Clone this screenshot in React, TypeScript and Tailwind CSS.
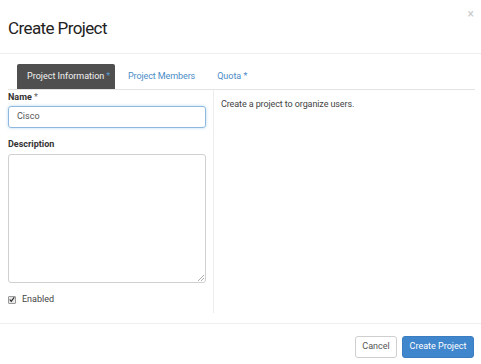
import React from "react";

export default function App() {
  return (
    <div className="w-[481px] h-[364px] bg-white relative overflow-hidden text-[#333]" style={{ fontFamily: "Roboto, 'Liberation Sans', sans-serif" }}>
      <div className="h-[54px] border-b border-[#eeeeee] pl-[8px] pt-[17px]">
        <div className="text-[17px] leading-[22px] tracking-[-0.6px] text-[#222]">Create Project</div>
      </div>
      <div className="absolute top-[7px] right-[7px] text-[12px] leading-[14px] text-[#c8c8c8]">×</div>
      <div className="pt-[11px] px-[8px]">
        <div className="flex items-end h-[25px] border-b border-[#e4e4e4] mr-[-2px] pl-[9px] text-[9px] whitespace-nowrap">
          <div className="h-[25px] w-[98px] bg-[#4f4f4f] text-[#f2f2f2] rounded-t-[2px] flex items-center pl-[10px]">
            Project Information<span className="text-[#5a9bd5] ml-[2px]">*</span>
          </div>
          <div className="h-[25px] flex items-center pl-[13px] text-[#4a8cc7] tracking-[-0.1px]">Project Members</div>
          <div className="h-[25px] flex items-center pl-[22px] text-[#4a8cc7]">Quota *</div>
        </div>
        <div className="flex">
          <div className="w-[198px] pt-[1px]">
            <div className="text-[9px] font-bold leading-[12px] text-[#333]">Name <span className="font-normal text-[#666]">*</span></div>
            <div className="mt-[3px] h-[22px] border border-[#8fb8de] rounded-[3px] shadow-[0_0_3px_rgba(102,175,233,0.5)] flex items-center pl-[8px] text-[9px] text-[#555]">Cisco</div>
            <div className="mt-[10px] text-[9px] font-bold leading-[12px] text-[#333]">Description</div>
            <div className="mt-[4px] h-[129px] border border-[#d0d0d0] rounded-[3px] relative">
              <svg className="absolute right-[1px] bottom-[1px]" width="6" height="6" viewBox="0 0 6 6">
                <path d="M6 0 L0 6 M6 3 L3 6" stroke="#999" strokeWidth="0.8" />
              </svg>
            </div>
            <div className="mt-[10px] flex items-center gap-[6px] text-[9px] text-[#444]">
              <div className="w-[8px] h-[8px] bg-[#e8e8e8] border border-[#999] rounded-[1px] flex items-center justify-center">
                <svg width="7" height="7" viewBox="0 0 8 8"><path d="M1 4 L3 6.5 L7 1" fill="none" stroke="#222" strokeWidth="1.6" /></svg>
              </div>
              Enabled
            </div>
          </div>
          <div className="ml-[7px] w-[1px] bg-[#ededed] h-[223px]"></div>
          <div className="pl-[7px] pt-[8px] text-[9px] text-[#444] tracking-[-0.1px]">Create a project to organize users.</div>
        </div>
      </div>
      <div className="mt-[10px] border-t border-[#eeeeee] flex justify-end pr-[7px] pt-[12px] gap-[5px] text-[9px]">
        <div className="h-[22px] w-[42px] border border-[#cfcfcf] rounded-[3px] flex items-center justify-center text-[#555]">Cancel</div>
        <div className="h-[22px] w-[72px] bg-[#3f86cd] border border-[#3a7dc0] rounded-[3px] flex items-center justify-center text-white">Create Project</div>
      </div>
    </div>
  );
}
